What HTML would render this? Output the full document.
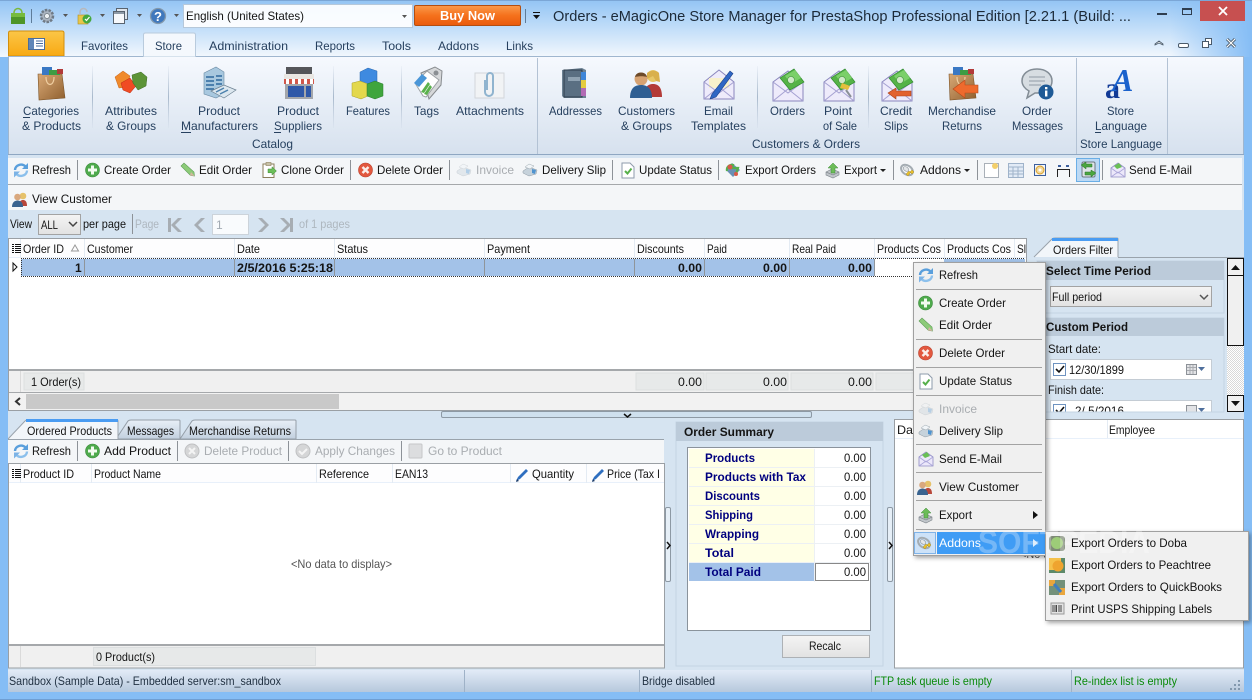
<!DOCTYPE html>
<html lang="en"><head><meta charset="utf-8"><title>Orders - eMagicOne Store Manager</title>
<style>
html,body{margin:0;padding:0;width:1252px;height:700px;overflow:hidden;background:#85bdf5}
svg{display:block}
text{font-family:"Liberation Sans",Arial,sans-serif;font-size:12px;fill:#141414;white-space:pre}
.r text{fill:#26405f}
.g text{fill:#a9adb1}
.b{font-weight:bold}
.n{font-weight:bold;fill:#00007f}
</style></head><body>
<svg xmlns="http://www.w3.org/2000/svg" width="1252" height="700" viewBox="0 0 1252 700">
<defs>
<linearGradient id="win" x1="0" y1="0" x2="0" y2="1"><stop offset="0" stop-color="#93c4f4"/><stop offset=".5" stop-color="#c2def9"/><stop offset="1" stop-color="#f2f7fd"/></linearGradient>
<linearGradient id="edge" x1="0" y1="0" x2="1" y2="0"><stop offset="0" stop-color="#85bdf5" stop-opacity="0"/><stop offset="1" stop-color="#85bdf5"/></linearGradient>
<linearGradient id="rib" x1="0" y1="0" x2="0" y2="1"><stop offset="0" stop-color="#f6f9fe"/><stop offset="1" stop-color="#d6e1ee"/></linearGradient>
<linearGradient id="gold" x1="0" y1="0" x2="0" y2="1"><stop offset="0" stop-color="#fbc647"/><stop offset="1" stop-color="#f8a913"/></linearGradient>
<linearGradient id="buy" x1="0" y1="0" x2="0" y2="1"><stop offset="0" stop-color="#fb9a4c"/><stop offset=".5" stop-color="#f5711c"/><stop offset="1" stop-color="#ea5a0c"/></linearGradient>
<linearGradient id="stat" x1="0" y1="0" x2="0" y2="1"><stop offset="0" stop-color="#e2ebf7"/><stop offset="1" stop-color="#b6c8dc"/></linearGradient>
<linearGradient id="btn" x1="0" y1="0" x2="0" y2="1"><stop offset="0" stop-color="#f4f4f4"/><stop offset="1" stop-color="#e2e2e2"/></linearGradient>
<linearGradient id="tabo" x1="0" y1="0" x2="0" y2="1"><stop offset="0" stop-color="#e8eff7"/><stop offset="1" stop-color="#c2d0df"/></linearGradient>
<linearGradient id="sep" x1="0" y1="0" x2="0" y2="1"><stop offset="0" stop-color="#b3c2d4" stop-opacity=".1"/><stop offset=".5" stop-color="#a9b9cc"/><stop offset="1" stop-color="#b3c2d4" stop-opacity=".1"/></linearGradient>
<linearGradient id="kraft" x1="0" y1="0" x2="1" y2="1"><stop offset="0" stop-color="#d9a976"/><stop offset="1" stop-color="#8f5f2e"/></linearGradient>
<filter id="sh" x="-5%" y="-5%" width="112%" height="112%"><feDropShadow dx="2" dy="2" stdDeviation="2" flood-color="#000" flood-opacity=".35"/></filter>
<pattern id="hatch" width="2" height="2" patternUnits="userSpaceOnUse"><rect width="2" height="2" fill="#fff"/><rect width="1" height="1" fill="#d8d8d8"/><rect x="1" y="1" width="1" height="1" fill="#d8d8d8"/></pattern>

<g id="i-refresh"><path d="M2 8A6 5.500 0 0 1 12.500 4.500" fill="none" stroke="#5a9fdc" stroke-width="2.400"/><path d="M15 1v6h-6z" fill="#5a9fdc"/><path d="M14 8.500A6 5.500 0 0 1 3.500 12" fill="none" stroke="#8cc0ec" stroke-width="2.400"/><path d="M1 15.500v-6h6z" fill="#7cb3e6"/></g>
<g id="i-plus"><circle cx="7.500" cy="8" r="7" fill="#4eaa4c" stroke="#3d8a3d" stroke-width=".6"/><path d="M6 3.500h3v3h3v3H9v3H6v-3H3v-3h3z" fill="#f2fbef"/></g>
<g id="i-edit"><path d="M1 4l3-3 10 9 .5 4-4-.5z" fill="#8ccb78" stroke="#5f9d58" stroke-width=".6"/><path d="M11 10l3.500 4-4.500-.5z" fill="#d4b5a0"/></g>
<g id="i-del"><circle cx="7.500" cy="8" r="7" fill="#e2583f" stroke="#b9422e" stroke-width=".6"/><path d="M4.500 5l6 6M10.500 5l-6 6" stroke="#fbeeea" stroke-width="2.400"/></g>
<g id="i-clone"><rect x="1" y="2" width="11" height="13.500" fill="#fff" stroke="#8a7d5a"/><rect x="4" y="0.500" width="5" height="3" fill="#c8c2a8" stroke="#8a7d5a" stroke-width=".6"/><path d="M6 7h4V4.800L14.500 9 10 13v-2.200H6z" fill="#6cbf59" stroke="#3f8a38" stroke-width=".5"/></g>
<g id="i-print"><path d="M1 9l6-4 8 3-1 4-7 2-6-3z" fill="#c6d2db" stroke="#8c98a2" stroke-width=".5"/><path d="M3 5l4-3 5 2-4 3z" fill="#f1f5f8" stroke="#9ba6ae" stroke-width=".5"/><path d="M10 7l4 1-1 4-3-1z" fill="#4f93cf"/></g>
<g id="i-update"><path d="M1 1h8l4 4v11H1z" fill="#fff" stroke="#8e9bab"/><path d="M4 9l2.500 2.500L10.500 6.500" fill="none" stroke="#56b04a" stroke-width="2"/></g>
<g id="i-exo"><path d="M1 8l6-7 8 7-7 7z" fill="#6a8fb4"/><path d="M2 9a5 5 0 0 1 6-6l-1 3h6l-2 6" fill="none" stroke="#55b04e" stroke-width="2.200"/><circle cx="5" cy="5" r="2.500" fill="#d85a48"/><circle cx="11" cy="12" r="2" fill="#d85a48"/></g>
<g id="i-exp"><path d="M1 10l6-3 7 3v3l-6 3-7-3z" fill="#c1c6cb" stroke="#7d848a" stroke-width=".6"/><path d="M1 10l7 3 6-3" fill="none" stroke="#858b90" stroke-width=".7"/><path d="M8 1l5 5h-3v5H6V6H3z" fill="#6cbc58" stroke="#3e8a38" stroke-width=".5"/></g>
<g id="i-add"><ellipse cx="7" cy="8" rx="6.500" ry="4.500" transform="rotate(35 7 8)" fill="none" stroke="#a4acb2" stroke-width="2"/><ellipse cx="6" cy="7" rx="3" ry="2" transform="rotate(35 6 7)" fill="#e3e6e8" stroke="#8b949b" stroke-width=".6"/><path d="M6 12l3-3 1.500 1.500L8 14zM10 10l2-2 2 2-2 2z" fill="#e8bf2b" stroke="#a0821b" stroke-width=".4"/></g>
<g id="i-mail"><path d="M1 6l7-5 7 5v9H1z" fill="#ece8fa" stroke="#8f8bc4" stroke-width=".8"/><path d="M1 15l7-5 7 5M1 6l7 5 7-5" fill="none" stroke="#a9a5d8" stroke-width=".8"/><path d="M4 4l5-3 3 4-5 2z" fill="#69bf55"/></g>
<g id="i-users"><circle cx="11" cy="5" r="3.300" fill="#e6c26a"/><path d="M7 15c0-5 2-6 4-6s4 1 4 6z" fill="#b8473a"/><circle cx="5.500" cy="6" r="3.300" fill="#d9a87e"/><path d="M0 16c0-5 3-6.500 5.500-6.500S11 11 11 16z" fill="#39638f"/></g>
<g id="i-pen"><path d="M1 14l2-4L11 2l2 2-8 8z" fill="#2f6fc0"/><path d="M1 15l1-3 2 2z" fill="#1c3b66"/></g>
<g id="dd"><path d="M0 0h5l-2.500 3z" fill="#555"/></g>
<g id="dd2"><path d="M0 0h6l-3 3z" fill="#222"/></g>
<g id="grid-i"><path d="M0 0h2v1H0zM3 0h6v1H3zM0 2h2v1H0zM3 2h6v1H3zM0 4h2v1H0zM3 4h6v1H3zM0 6h2v1H0zM3 6h6v1H3zM0 8h2v1H0zM3 8h6v1H3z" fill="#111"/></g>
<g id="env"><path d="M1 14l15-11 15 11v19H1z" fill="#eeebfb" stroke="#8a86bd"/><path d="M1 33l15-12 15 12M1 14l15 11 15-11" fill="none" stroke="#a5a1d2"/><path d="M8 10l14-9 10 13-14 8z" fill="#55b347" stroke="#2f8a2e" stroke-width=".7"/><path d="M13 8l10-6 6 8-10 6z" fill="#7bd069"/><circle cx="19" cy="12" r="3.500" fill="#cfe9c7" stroke="#3f8d3a" stroke-width=".6"/></g>
<g id="bag"><path d="M2 7h24l3 24-26 2z" fill="url(#kraft)" stroke="#7c5428" stroke-width=".6"/><path d="M6 0h10v8H6z" fill="#3a78c4"/><path d="M13 3h11v5H13z" fill="#3d9c43"/><path d="M21 2h6v5h-6z" fill="#b23a3a"/><path d="M10 10c0 10 8 10 8 0" fill="none" stroke="#f0cfa2" stroke-width="1.200"/></g>
</defs>

<!-- window frame -->
<rect width="1252" height="700" fill="#85bdf5"/>
<rect width="1252" height="57" fill="url(#win)"/>
<rect x="1170" width="82" height="57" fill="url(#edge)"/>
<rect width="1252" height="1" fill="#7ba6d6"/>
<rect x="0" y="699" width="1252" height="1" fill="#6f9ed2"/>

<!-- close buttons -->
<rect x="1200" y="1" width="45" height="20" fill="#c75050"/>
<path d="M1219 7l8 8M1227 7l-8 8" stroke="#fff" stroke-width="1.800"/>
<rect x="1157" y="13" width="10" height="2" fill="#2f3e4f"/>
<rect x="1182.500" y="8.500" width="9" height="6" fill="none" stroke="#2f3e4f"/><rect x="1182" y="8" width="10" height="2" fill="#2f3e4f"/>

<!-- QAT -->
<path d="M11 13h14v11H11z" fill="#4f9526"/><path d="M14 13c0-6 8-6 8 0" fill="none" stroke="#7ab83c" stroke-width="1.500"/><path d="M11 13h14v4H11z" fill="#77bb3c"/>
<rect x="31" y="9" width="1" height="14" fill="#5e7c99"/>
<circle cx="47" cy="16" r="6" fill="#aab4c0" stroke="#6f7a86" stroke-width="2.500" stroke-dasharray="2.500 1.200"/><circle cx="47" cy="16" r="2.500" fill="#eef1f4" stroke="#70797f" stroke-width=".7"/>
<use href="#dd" x="63" y="14"/>
<rect x="78" y="15" width="10" height="9" fill="#e8c64a" stroke="#b08f22" stroke-width=".6"/><path d="M80 15v-3a3.500 3.500 0 0 1 7 0" fill="none" stroke="#b7b9bd" stroke-width="1.500"/><circle cx="87" cy="19" r="4.500" fill="#45a83f"/><path d="M85 19l1.500 1.500L89.500 17" fill="none" stroke="#fff" stroke-width="1.200"/>
<use href="#dd" x="100" y="14"/>
<rect x="116.500" y="8.500" width="11" height="11" fill="#dfe5ec" stroke="#58636f"/><rect x="113.500" y="11.500" width="11" height="12" fill="#f6f8fb" stroke="#58636f"/><rect x="114" y="12" width="10" height="2" fill="#8d99a6"/>
<use href="#dd" x="137" y="14"/>
<circle cx="158" cy="16" r="7.500" fill="#3f78bd" stroke="#8499ac" stroke-width="1.300"/><text x="154" y="21" style="font-weight:bold;fill:#fff;font-size:13px">?</text>
<use href="#dd" x="174" y="14"/>
<rect x="183.500" y="4.500" width="229" height="23" fill="#fff" fill-opacity=".92" stroke="#b6c8da"/>
<text x="186" y="20" textLength="118" lengthAdjust="spacingAndGlyphs">English (United States)</text>
<use href="#dd" x="402" y="15"/>
<rect x="414.500" y="5.500" width="106" height="20" rx="1.500" fill="url(#buy)" stroke="#b34e10"/>
<text x="440" y="20" textLength="55" lengthAdjust="spacingAndGlyphs" style="fill:#fff;font-weight:bold;font-size:13px">Buy Now</text>
<rect x="525" y="9" width="1" height="14" fill="#5e7c99"/>
<rect x="533" y="12" width="7" height="1" fill="#111"/><path d="M533 15h7l-3.500 4z" fill="#111"/>
<text x="553" y="21" textLength="578" lengthAdjust="spacingAndGlyphs" style="font-size:15px;fill:#1c2a38">Orders - eMagicOne Store Manager for PrestaShop Professional Edition [2.21.1 (Build: ...</text>

<!-- ribbon tabs -->
<path d="M8.500 56V33q0-2 2-2h51.500q2 0 2 2v23z" fill="url(#gold)" stroke="#d38f0c"/>
<rect x="28.500" y="38.500" width="16" height="11" fill="#fff" stroke="#4a6d9c"/><rect x="29" y="39" width="5" height="10" fill="#5f86b8"/><path d="M36 41h7M36 43.500h7M36 46h7" stroke="#4a6d9c"/>
<path d="M143.500 57V35q0-2 2-2h48q2 0 2 2v22z" fill="#f4f8fd" stroke="#b9cbdd"/>
<g class="r">
<text x="81" y="50" textLength="47" lengthAdjust="spacingAndGlyphs">Favorites</text>
<text x="155" y="50" textLength="27" lengthAdjust="spacingAndGlyphs">Store</text>
<text x="209" y="50" textLength="79" lengthAdjust="spacingAndGlyphs">Administration</text>
<text x="315" y="50" textLength="40" lengthAdjust="spacingAndGlyphs">Reports</text>
<text x="382" y="50" textLength="29" lengthAdjust="spacingAndGlyphs">Tools</text>
<text x="438" y="50" textLength="41" lengthAdjust="spacingAndGlyphs">Addons</text>
<text x="506" y="50" textLength="27" lengthAdjust="spacingAndGlyphs">Links</text>
</g>
<path d="M1155 44l4-3 4 3v1l-4-2-4 2z" fill="#fff" stroke="#4a5a6a" stroke-width=".8"/>
<rect x="1178.500" y="43.500" width="10" height="4" rx="1.500" fill="#fff" stroke="#4a5a6a"/>
<rect x="1205.500" y="38.500" width="6" height="6" fill="#fff" stroke="#4a5a6a"/><rect x="1202.500" y="41.500" width="6" height="6" fill="#fff" stroke="#4a5a6a"/>
<path d="M1227 39l8 8M1235 39l-8 8" stroke="#4a5a6a" stroke-width="3"/><path d="M1227 39l8 8M1235 39l-8 8" stroke="#fff" stroke-width="1.200"/>

<!-- ribbon -->
<rect x="8" y="57" width="1236" height="98" fill="url(#rib)"/>
<path d="M143 56.500H8.500V155M196 56.500H1243.500V155" fill="none" stroke="#9fb6cf"/>
<rect x="8" y="154" width="1236" height="1" fill="#8fa7c2"/>
<g fill="url(#sep)">
<rect x="92" y="66" width="1" height="62"/><rect x="168" y="66" width="1" height="62"/><rect x="333" y="66" width="1" height="62"/><rect x="401" y="66" width="1" height="62"/><rect x="757" y="66" width="1" height="62"/><rect x="868" y="66" width="1" height="62"/>
</g>
<rect x="537" y="58" width="1" height="96" fill="#b3c2d4"/><rect x="1076" y="58" width="1" height="96" fill="#b3c2d4"/><rect x="1167" y="58" width="1" height="96" fill="#b3c2d4"/>

<!-- ribbon icons -->
<use href="#bag" x="36" y="67"/>
<g transform="translate(115,71)"><path d="M0 6l8-6 7 5-4 11-7 1z" fill="#f08a2c" stroke="#c5611a" stroke-width=".5"/><path d="M6 12l9-5 6 8-6 7-7-3z" fill="#f04b24" stroke="#b92f14" stroke-width=".5"/><path d="M17 4l9-3 6 5-1 9-8 4-5-7z" fill="#5c9438" stroke="#3d6c24" stroke-width=".5"/></g>
<g transform="translate(204,67)"><path d="M0 6l12-6 8 5v22l-8 4-12-4z" fill="#a8c8df" stroke="#6a8aa3" stroke-width=".6"/><path d="M2 10h8M2 14h8M2 18h8M2 22h8M12 9h6M12 13h6M12 17h6" stroke="#3f76a8" stroke-width="1.800"/><path d="M7 24l13-6 12 5-12 8z" fill="#dce7ef" stroke="#6a7f90" stroke-width=".7"/><path d="M12 25l8-4M16 27l8-4" stroke="#4d82ad" stroke-width="1.500"/></g>
<g transform="translate(284,67)"><rect x="2" y="0" width="26" height="7" fill="#55565a"/><rect x="0" y="7" width="30" height="5" fill="#e9e7e3"/><path d="M0 12h30v5H0z" fill="#d0574a"/><path d="M2 12h3v5H2zM8 12h3v5H8zM14 12h3v5h-3zM20 12h3v5h-3zM26 12h3v5h-3z" fill="#fff"/><rect x="1" y="17" width="28" height="15" fill="#a3a6ab"/><rect x="4" y="19" width="16" height="11" fill="#2f58a8"/><rect x="22" y="19" width="5" height="11" fill="#2f58a8"/></g>
<g transform="translate(352,68)"><path d="M8 4l8-4 9 3v11l-9 3-8-3z" fill="#3e8ae0" stroke="#2766ad" stroke-width=".5"/><path d="M0 15l8-2 8 3v12l-7 3-9-3z" fill="#e3d84d" stroke="#a79f2a" stroke-width=".5"/><path d="M15 16l8-3 8 3v12l-8 3-8-3z" fill="#3fa53d" stroke="#2a7a2c" stroke-width=".5"/></g>
<g transform="translate(413,67)"><path d="M8 6l14-6 7 4-1 14-12 14z" fill="#d6d8da" stroke="#868a8e"/><path d="M2 16L14 4l12 9-13 17-3-1z" fill="#fff" stroke="#9da1a5"/><path d="M1 16l8-9 5 4-8 9z" fill="#4a96d8"/><path d="M8 25l7-10 2 2-6 9zM11 27l6-9 2 2-5 8z" fill="#5ab14c"/><circle cx="23" cy="6" r="2.500" fill="#8b8f93"/></g>
<g transform="translate(475,70)"><rect x="0" y="3" width="29" height="25" fill="#f1f3f5" stroke="#d2d6da"/><path d="M10 10v12a4 4 0 0 0 8 0V6a3 3 0 0 0-6 0v14" fill="none" stroke="#90b4cf" stroke-width="2"/></g>
<g transform="translate(561,67)"><path d="M1 3l20-2 4 2v28H3l-2-2z" fill="#6d8294"/><path d="M3 3h18v27H3z" fill="#5a6f82" stroke="#2e3e4d"/><rect x="7" y="10" width="12" height="4" fill="#8fa2b2"/><rect x="20" y="5" width="5" height="8" fill="#3f86d8"/><rect x="20" y="13" width="5" height="8" fill="#e4cc3f"/><rect x="20" y="21" width="5" height="8" fill="#b26bb5"/></g>
<g transform="translate(630,69)"><circle cx="23" cy="7" r="6" fill="#e7c767"/><path d="M14 28c0-10 4-13 9-13s9 3 9 13z" fill="#b33b38"/><path d="M17 4c3-3 10-3 12 0l1 9-4-1-3-5-6 3z" fill="#d9b04b"/><circle cx="11" cy="10" r="6.500" fill="#d6a272"/><path d="M5 8c1-6 11-6 12 0-3-1-8-1-12 0z" fill="#6d4a2a"/><path d="M0 29c0-10 5-13 11-13s11 3 11 13z" fill="#2f5f93"/></g>
<g transform="translate(703,68)"><path d="M1 14l15-12 15 12v17H1z" fill="#eeebfb" stroke="#8a86bd"/><path d="M6 10h20v10H6z" fill="#f8f1cc"/><path d="M1 31l15-12 15 12M1 14l15 11 15-11" fill="none" stroke="#a5a1d2"/><path d="M9 26L27 3l3 2.500L13 29l-6 2z" fill="#2f66c4" stroke="#1b3f86" stroke-width=".6"/></g>
<use href="#env" x="772" y="68"/>
<use href="#env" x="823" y="68"/><path d="M842 83l8 3-2 4-8-2z" fill="#e4bf3d"/><path d="M846 90l5 7" stroke="#8b9197" stroke-width="2"/>
<use href="#env" x="881" y="68"/><path d="M888 93l8-5v3h15v5h-15v3z" fill="#e2622e" stroke="#a8401a" stroke-width=".6"/>
<use href="#bag" x="947" y="67"/><path d="M953 89l12-9v5h13v8h-13v5z" fill="#ee6a2d" stroke="#b64a1b" stroke-width=".6"/>
<g transform="translate(1022,69)"><path d="M15 0c9 0 15 5 15 12s-6 12-15 12l-2 0-8 5 2-7C3 20 0 16 0 12 0 5 6 0 15 0z" fill="#d7dde2" stroke="#838d96" stroke-width="1.500"/><path d="M7 8h16M7 12h16M7 16h12" stroke="#929ca5"/><circle cx="24" cy="23" r="7.500" fill="#1e5a96"/><rect x="23" y="21.500" width="2.400" height="6" fill="#fff"/><rect x="23" y="18" width="2.400" height="2.300" fill="#fff"/></g>
<text x="1105" y="98" style="font-family:'Liberation Serif',serif;font-weight:bold;font-size:30px;fill:#123a96">a</text>
<text x="1112" y="91" style="font-family:'Liberation Serif',serif;font-weight:bold;font-style:italic;font-size:32px;fill:#1b62cc">A</text>

<!-- ribbon labels -->
<g class="r">
<text x="23" y="115" textLength="56" lengthAdjust="spacingAndGlyphs">Categories</text><rect x="23" y="117" width="7" height="1" fill="#26405f"/>
<text x="22" y="130" textLength="59" lengthAdjust="spacingAndGlyphs">&amp; Products</text>
<text x="105" y="115" textLength="52" lengthAdjust="spacingAndGlyphs">Attributes</text>
<text x="106" y="130" textLength="50" lengthAdjust="spacingAndGlyphs">&amp; Groups</text>
<text x="198" y="115" textLength="42" lengthAdjust="spacingAndGlyphs">Product</text>
<text x="181" y="130" textLength="77" lengthAdjust="spacingAndGlyphs">Manufacturers</text><rect x="181" y="132" width="10" height="1" fill="#26405f"/>
<text x="277" y="115" textLength="42" lengthAdjust="spacingAndGlyphs">Product</text>
<text x="274" y="130" textLength="48" lengthAdjust="spacingAndGlyphs">Suppliers</text><rect x="274" y="132" width="7" height="1" fill="#26405f"/>
<text x="346" y="115" textLength="44" lengthAdjust="spacingAndGlyphs">Features</text>
<text x="414" y="115" textLength="25" lengthAdjust="spacingAndGlyphs">Tags</text>
<text x="456" y="115" textLength="68" lengthAdjust="spacingAndGlyphs">Attachments</text>
<text x="549" y="115" textLength="53" lengthAdjust="spacingAndGlyphs">Addresses</text>
<text x="618" y="115" textLength="57" lengthAdjust="spacingAndGlyphs">Customers</text>
<text x="621" y="130" textLength="51" lengthAdjust="spacingAndGlyphs">&amp; Groups</text>
<text x="704" y="115" textLength="29" lengthAdjust="spacingAndGlyphs">Email</text>
<text x="691" y="130" textLength="55" lengthAdjust="spacingAndGlyphs">Templates</text>
<text x="770" y="115" textLength="35" lengthAdjust="spacingAndGlyphs">Orders</text>
<text x="824" y="115" textLength="28" lengthAdjust="spacingAndGlyphs">Point</text>
<text x="823" y="130" textLength="34" lengthAdjust="spacingAndGlyphs">of Sale</text>
<text x="880" y="115" textLength="32" lengthAdjust="spacingAndGlyphs">Credit</text>
<text x="884" y="130" textLength="24" lengthAdjust="spacingAndGlyphs">Slips</text>
<text x="928" y="115" textLength="68" lengthAdjust="spacingAndGlyphs">Merchandise</text>
<text x="942" y="130" textLength="40" lengthAdjust="spacingAndGlyphs">Returns</text>
<text x="1022" y="115" textLength="30" lengthAdjust="spacingAndGlyphs">Order</text>
<text x="1012" y="130" textLength="51" lengthAdjust="spacingAndGlyphs">Messages</text>
<text x="1107" y="115" textLength="27" lengthAdjust="spacingAndGlyphs">Store</text>
<text x="1095" y="130" textLength="52" lengthAdjust="spacingAndGlyphs">Language</text><rect x="1095" y="132" width="6" height="1" fill="#26405f"/>
<text x="252" y="148" textLength="41" lengthAdjust="spacingAndGlyphs">Catalog</text>
<text x="752" y="148" textLength="108" lengthAdjust="spacingAndGlyphs">Customers &amp; Orders</text>
<text x="1080" y="148" textLength="82" lengthAdjust="spacingAndGlyphs">Store Language</text>
</g>

<!-- main area backgrounds -->
<rect x="8" y="155" width="1236" height="515" fill="#d6e4f1"/>
<rect x="8" y="158" width="1234" height="52" fill="#f4f6f8"/>
<rect x="8" y="184" width="1234" height="1" fill="#a5a8ab"/>

<!-- toolbar 1 -->
<use href="#i-refresh" x="13" y="162"/><text x="32" y="174" textLength="39" lengthAdjust="spacingAndGlyphs">Refresh</text>
<g fill="#8d9298"><rect x="77" y="160" width="1" height="20"/><rect x="350" y="160" width="1" height="20"/><rect x="449" y="160" width="1" height="20"/><rect x="612" y="160" width="1" height="20"/><rect x="718" y="160" width="1" height="20"/><rect x="893" y="160" width="1" height="20"/><rect x="977" y="160" width="1" height="20"/><rect x="1102" y="160" width="1" height="20"/></g>
<use href="#i-plus" x="85" y="162"/><text x="104" y="174" textLength="67" lengthAdjust="spacingAndGlyphs">Create Order</text>
<use href="#i-edit" x="180" y="162"/><text x="199" y="174" textLength="53" lengthAdjust="spacingAndGlyphs">Edit Order</text>
<use href="#i-clone" x="262" y="162"/><text x="281" y="174" textLength="63" lengthAdjust="spacingAndGlyphs">Clone Order</text>
<use href="#i-del" x="358" y="162"/><text x="377" y="174" textLength="66" lengthAdjust="spacingAndGlyphs">Delete Order</text>
<use href="#i-print" x="456" y="162" opacity=".4"/><text x="476" y="174" textLength="38" lengthAdjust="spacingAndGlyphs" style="fill:#a9adb1">Invoice</text>
<use href="#i-print" x="522" y="162"/><text x="542" y="174" textLength="64" lengthAdjust="spacingAndGlyphs">Delivery Slip</text>
<use href="#i-update" x="621" y="162"/><text x="639" y="174" textLength="73" lengthAdjust="spacingAndGlyphs">Update Status</text>
<use href="#i-exo" x="725" y="162"/><text x="745" y="174" textLength="71" lengthAdjust="spacingAndGlyphs">Export Orders</text>
<use href="#i-exp" x="825" y="162"/><text x="844" y="174" textLength="33" lengthAdjust="spacingAndGlyphs">Export</text><use href="#dd2" x="880" y="169"/>
<use href="#i-add" x="900" y="162"/><text x="920" y="174" textLength="41" lengthAdjust="spacingAndGlyphs">Addons</text><use href="#dd2" x="964" y="169"/>
<rect x="984.500" y="163.500" width="14" height="14" fill="#fff" stroke="#a9b0b8"/><circle cx="995" cy="166" r="3" fill="#f3cf6a"/>
<rect x="1008.500" y="163.500" width="15" height="14" fill="#e2ebf6" stroke="#9fb3ca"/><path d="M1009 167h14M1009 171h14M1009 174h14M1013 167v10M1018 167v10" stroke="#9fb3ca"/>
<rect x="1034.500" y="164.500" width="11" height="11" fill="none" stroke="#3c5f9d"/><circle cx="1040" cy="170" r="4" fill="#f3d89a" stroke="#d9a02a"/><circle cx="1040" cy="170" r="1.500" fill="#fff"/>
<path d="M1058 166h3M1066 166h3" stroke="#3c5f9d" stroke-width="2"/><path d="M1057.500 177v-7.500h12V177" fill="none" stroke="#222"/>
<rect x="1076.500" y="158.500" width="23" height="23" fill="#bcd9f4" stroke="#6aaee6"/>
<rect x="1082" y="162" width="13" height="15" rx="1.500" fill="#dfe4e8" stroke="#6e7880"/><path d="M1081 165l5-3v2h6v3h-6v2z" fill="#4ba53f" stroke="#27752a" stroke-width=".5"/><path d="M1096 173l-5-3v2h-6v3h6v2z" fill="#4ba53f" stroke="#27752a" stroke-width=".5"/>
<use href="#i-mail" x="1110" y="162"/><text x="1129" y="174" textLength="63" lengthAdjust="spacingAndGlyphs">Send E-Mail</text>
<use href="#i-users" x="12" y="191"/><text x="32" y="203" textLength="80" lengthAdjust="spacingAndGlyphs">View Customer</text>

<!-- pager -->
<text x="10" y="228" textLength="22" lengthAdjust="spacingAndGlyphs">View</text>
<rect x="38.500" y="214.500" width="42" height="20" fill="url(#btn)" stroke="#a3a3a3"/>
<text x="41" y="229" textLength="17" lengthAdjust="spacingAndGlyphs">ALL</text>
<path d="M69 222l4 4 4-4" fill="none" stroke="#444" stroke-width="1.500"/>
<text x="83" y="228" textLength="43" lengthAdjust="spacingAndGlyphs">per page</text>
<rect x="132" y="214" width="1" height="20" fill="#8d9298"/>
<rect x="212.500" y="214.500" width="36" height="20" fill="#fff" stroke="#ccd3da" fill-opacity=".85"/>
<text x="135" y="228" textLength="24" lengthAdjust="spacingAndGlyphs" style="fill:#aeb7bf">Page</text><text x="299" y="228" textLength="51" lengthAdjust="spacingAndGlyphs" style="fill:#aeb7bf">of 1 pages</text><text x="216" y="229" style="fill:#a3acb4">1</text>
<g fill="#a7adb3"><rect x="168" y="218" width="3" height="14"/><path d="M182 218l-7 7 7 7h-4l-7-7 7-7z"/><path d="M205 218l-7 7 7 7h-4l-7-7 7-7z"/><path d="M258 218l7 7-7 7h4l7-7-7-7z"/><path d="M280 218l7 7-7 7h4l7-7-7-7z"/><rect x="290" y="218" width="3" height="14"/></g>

<!-- orders grid -->
<rect x="8.500" y="238.500" width="1018" height="172" fill="#fff" stroke="#9a9fa4"/>
<rect x="9" y="239" width="1017" height="19" fill="#fdfdfe"/>
<rect x="9" y="257" width="1017" height="1" fill="#e8f0fa"/>
<g fill="#e4ebf3"><rect x="20" y="239" width="1" height="19"/><rect x="84" y="239" width="1" height="19"/><rect x="234" y="239" width="1" height="19"/><rect x="334" y="239" width="1" height="19"/><rect x="484" y="239" width="1" height="19"/><rect x="634" y="239" width="1" height="19"/><rect x="704" y="239" width="1" height="19"/><rect x="789" y="239" width="1" height="19"/><rect x="874" y="239" width="1" height="19"/><rect x="944" y="239" width="1" height="19"/><rect x="1014" y="239" width="1" height="19"/></g>
<use href="#grid-i" x="12" y="244"/>
<text x="23" y="253" textLength="41" lengthAdjust="spacingAndGlyphs">Order ID</text>
<path d="M71.500 251l3.500-6 3.500 6z" fill="none" stroke="#999"/>
<text x="87" y="253" textLength="46" lengthAdjust="spacingAndGlyphs">Customer</text>
<text x="237" y="253" textLength="23" lengthAdjust="spacingAndGlyphs">Date</text>
<text x="337" y="253" textLength="31" lengthAdjust="spacingAndGlyphs">Status</text>
<text x="487" y="253" textLength="43" lengthAdjust="spacingAndGlyphs">Payment</text>
<text x="637" y="253" textLength="47" lengthAdjust="spacingAndGlyphs">Discounts</text>
<text x="707" y="253" textLength="20" lengthAdjust="spacingAndGlyphs">Paid</text>
<text x="792" y="253" textLength="44" lengthAdjust="spacingAndGlyphs">Real Paid</text>
<text x="877" y="253" textLength="64" lengthAdjust="spacingAndGlyphs">Products Cos</text>
<text x="947" y="253" textLength="64" lengthAdjust="spacingAndGlyphs">Products Cos</text>
<text x="1017" y="253" textLength="9" lengthAdjust="spacingAndGlyphs">Sl</text>
<rect x="21" y="259" width="854" height="17" fill="#a3c2e8"/>
<rect x="944" y="259" width="81" height="17" fill="#a3c2e8"/>
<g shape-rendering="crispEdges"><path d="M21 258.500H1025M21 276.500H1025M21.500 258v19" stroke="#333" stroke-dasharray="1 1" fill="none"/></g>
<g fill="#8f959b"><rect x="84" y="259" width="1" height="17"/><rect x="234" y="259" width="1" height="17"/><rect x="334" y="259" width="1" height="17"/><rect x="484" y="259" width="1" height="17"/><rect x="634" y="259" width="1" height="17"/><rect x="704" y="259" width="1" height="17"/><rect x="789" y="259" width="1" height="17"/><rect x="874" y="259" width="1" height="17"/></g>
<path d="M13 263l4 4-4 4z" fill="#fff" stroke="#111"/>
<text x="75" y="272" class="b">1</text>
<text x="237" y="272" class="b" textLength="96" lengthAdjust="spacingAndGlyphs">2/5/2016 5:25:18</text>
<text x="678" y="272" class="b" textLength="24" lengthAdjust="spacingAndGlyphs">0.00</text>
<text x="763" y="272" class="b" textLength="24" lengthAdjust="spacingAndGlyphs">0.00</text>
<text x="848" y="272" class="b" textLength="24" lengthAdjust="spacingAndGlyphs">0.00</text>
<!-- grid footer -->
<rect x="9" y="369" width="1017" height="2" fill="#a5a8ab"/>
<rect x="9" y="371" width="1017" height="22" fill="#f0f0f0"/>
<rect x="20" y="371" width="1" height="22" fill="#dadada"/>
<rect x="24" y="373" width="60" height="17" fill="#e7e9e9" stroke="#dcdfe0"/>
<text x="31" y="386" textLength="50" lengthAdjust="spacingAndGlyphs">1 Order(s)</text>
<g fill="#e7e9e9" stroke="#dcdfe0"><rect x="636" y="373" width="68" height="17"/><rect x="706" y="373" width="82" height="17"/><rect x="791" y="373" width="82" height="17"/><rect x="876" y="373" width="40" height="17"/></g>
<text x="678" y="386" textLength="24" lengthAdjust="spacingAndGlyphs">0.00</text>
<text x="763" y="386" textLength="24" lengthAdjust="spacingAndGlyphs">0.00</text>
<text x="848" y="386" textLength="24" lengthAdjust="spacingAndGlyphs">0.00</text>
<rect x="9" y="392" width="1017" height="1" fill="#a5a8ab"/>
<rect x="9" y="393" width="1017" height="17" fill="#f2f2f2"/>
<path d="M20 398l-4 3.500 4 3.500" fill="none" stroke="#333" stroke-width="2"/>
<rect x="26" y="394" width="313" height="15" fill="#c9c9c9"/>
<rect x="8" y="410" width="1020" height="1" fill="#9a9fa4"/>

<!-- orders filter -->
<path d="M1034 257l18-18q1-1 3-1h62q1 0 1 1v18" fill="#f2f6fa" stroke="#9aa3ac"/>
<rect x="1052" y="238" width="66" height="3" fill="#4a9cf2"/>
<text x="1053" y="254" textLength="60" lengthAdjust="spacingAndGlyphs">Orders Filter</text>
<path d="M1118 257.500H1244" stroke="#9aa3ac"/>
<rect x="1037" y="261" width="187" height="52" fill="#d6e4f1" stroke="#c4d4e3"/>
<rect x="1037" y="261" width="187" height="19" fill="#bccbda"/>
<text x="1046" y="275" class="b" textLength="105" lengthAdjust="spacingAndGlyphs">Select Time Period</text>
<rect x="1050.500" y="286.500" width="161" height="20" fill="url(#btn)" stroke="#a3a3a3"/>
<text x="1052" y="301" textLength="50" lengthAdjust="spacingAndGlyphs">Full period</text>
<path d="M1200 295l4 4 4-4" fill="none" stroke="#555" stroke-width="1.500"/>
<rect x="1037" y="318" width="187" height="94" fill="#d6e4f1" stroke="#c4d4e3"/>
<rect x="1037" y="318" width="187" height="18" fill="#bccbda"/>
<text x="1046" y="331" class="b" textLength="82" lengthAdjust="spacingAndGlyphs">Custom Period</text>
<text x="1048" y="353" textLength="53" lengthAdjust="spacingAndGlyphs">Start date:</text>
<rect x="1050.500" y="359.500" width="161" height="20" fill="#fff" stroke="#c4ccd4"/>
<rect x="1053.500" y="363.500" width="12" height="12" fill="#fff" stroke="#6f93c0"/><path d="M1056 369l3 3 5-6" fill="none" stroke="#111" stroke-width="1.600"/>
<text x="1069" y="374" textLength="55" lengthAdjust="spacingAndGlyphs">12/30/1899</text>
<rect x="1186.500" y="364.500" width="10" height="10" fill="#e2e3e6" stroke="#8d9298"/><path d="M1187 367.500h9M1187 370.500h9M1190 365v9M1193 365v9" stroke="#a8abb0"/><path d="M1198 367h7l-3.500 4z" fill="#4f6f9c"/>
<text x="1048" y="394" textLength="56" lengthAdjust="spacingAndGlyphs">Finish date:</text>
<svg x="1050" y="400" width="162" height="11.500" viewBox="1050 400 162 11.500">
<rect x="1050.500" y="400.500" width="161" height="20" fill="#fff" stroke="#c4ccd4"/>
<rect x="1053.500" y="404.500" width="12" height="12" fill="#fff" stroke="#6f93c0"/><path d="M1056 410l3 3 5-6" fill="none" stroke="#111" stroke-width="1.600"/>
<text x="1075" y="415" textLength="49" lengthAdjust="spacingAndGlyphs">2/ 5/2016</text>
<rect x="1186.500" y="405.500" width="10" height="10" fill="#e2e3e6" stroke="#8d9298"/><path d="M1198 408h7l-3.500 4z" fill="#4f6f9c"/>
</svg>
<rect x="1227" y="258" width="17" height="154" fill="url(#hatch)"/>
<rect x="1227.500" y="258.500" width="16" height="17" fill="#f0f0f0" stroke="#111"/><path d="M1231 270l4.500-5 4.500 5z" fill="#111"/>
<rect x="1227.500" y="275.500" width="16" height="70" fill="#f0f0f0" stroke="#111"/>
<rect x="1227.500" y="395.500" width="16" height="16" fill="#f0f0f0" stroke="#111"/><path d="M1231 401l4.500 5 4.500-5z" fill="#111"/>

<!-- splitter -->
<rect x="441.500" y="411.500" width="370" height="6" rx="1.500" fill="#cfe0ee" stroke="#8d99a4"/>
<path d="M624 414l3.500 3 3.500-3" fill="none" stroke="#111" stroke-width="1.500"/>

<!-- bottom tabs -->
<path d="M296 439v-18q0-1-1-1h-100q-2 0-3 1l-12 18z" fill="url(#tabo)" stroke="#959ea8"/>
<path d="M180 439v-18q0-1-1-1h-48q-2 0-3 1l-12 18z" fill="url(#tabo)" stroke="#959ea8"/>
<path d="M8 439l17-18q1-1 3-1h89q1 0 1 1v18" fill="#f2f6fa" stroke="#9aa3ac"/>
<rect x="26" y="419" width="92" height="3" fill="#4a9cf2"/>
<text x="27" y="435" textLength="85" lengthAdjust="spacingAndGlyphs">Ordered Products</text>
<text x="127" y="435" textLength="47" lengthAdjust="spacingAndGlyphs">Messages</text>
<text x="189" y="435" textLength="102" lengthAdjust="spacingAndGlyphs">Merchandise Returns</text>

<!-- bottom toolbar -->
<rect x="8" y="439" width="656" height="24" fill="#f4f6f8"/>
<rect x="8" y="439" width="656" height="1" fill="#9aa3ac"/>
<use href="#i-refresh" x="13" y="443"/><text x="32" y="455" textLength="39" lengthAdjust="spacingAndGlyphs">Refresh</text>
<use href="#i-plus" x="85" y="443"/><text x="104" y="455" textLength="67" lengthAdjust="spacingAndGlyphs">Add Product</text>
<rect x="77" y="441" width="1" height="20" fill="#8d9298"/><rect x="177" y="441" width="1" height="20" fill="#8d9298"/><rect x="288" y="441" width="1" height="20" fill="#8d9298"/><rect x="401" y="441" width="1" height="20" fill="#8d9298"/>
<circle cx="192" cy="451" r="7" fill="#d5d6d7" stroke="#bfc0c2"/><path d="M189 448l6 6M195 448l-6 6" stroke="#f4f4f4" stroke-width="2"/>
<text x="204" y="455" textLength="78" lengthAdjust="spacingAndGlyphs" style="fill:#a9adb1">Delete Product</text>
<circle cx="303" cy="451" r="7" fill="#d5d6d7" stroke="#bfc0c2"/><path d="M299 451l3 3 5-5" fill="none" stroke="#f4f4f4" stroke-width="2"/>
<text x="315" y="455" textLength="80" lengthAdjust="spacingAndGlyphs" style="fill:#a9adb1">Apply Changes</text>
<rect x="409" y="444" width="13" height="14" rx="1" fill="#dcdddf" stroke="#c6c7c9"/>
<text x="428" y="455" textLength="74" lengthAdjust="spacingAndGlyphs" style="fill:#a9adb1">Go to Product</text>

<!-- products grid -->
<rect x="8.500" y="463.500" width="656" height="204.500" fill="#fff" stroke="#9a9fa4"/>
<rect x="9" y="464" width="655" height="19" fill="#fdfdfe"/>
<rect x="9" y="482" width="655" height="1" fill="#e8f0fa"/>
<g fill="#e4ebf3"><rect x="20" y="464" width="1" height="19"/><rect x="91" y="464" width="1" height="19"/><rect x="316" y="464" width="1" height="19"/><rect x="392" y="464" width="1" height="19"/><rect x="510" y="464" width="1" height="19"/><rect x="586" y="464" width="1" height="19"/></g>
<use href="#grid-i" x="12" y="469"/>
<text x="23" y="478" textLength="51" lengthAdjust="spacingAndGlyphs">Product ID</text>
<text x="94" y="478" textLength="67" lengthAdjust="spacingAndGlyphs">Product Name</text>
<text x="319" y="478" textLength="50" lengthAdjust="spacingAndGlyphs">Reference</text>
<text x="395" y="478" textLength="33" lengthAdjust="spacingAndGlyphs">EAN13</text>
<use href="#i-pen" x="515" y="467"/><text x="532" y="478" textLength="42" lengthAdjust="spacingAndGlyphs">Quantity</text>
<use href="#i-pen" x="591" y="467"/><text x="607" y="478" textLength="53" lengthAdjust="spacingAndGlyphs">Price (Tax I</text>
<text x="291" y="568" textLength="101" lengthAdjust="spacingAndGlyphs" style="fill:#555">&lt;No data to display&gt;</text>
<rect x="9" y="644" width="655" height="2" fill="#a5a8ab"/>
<rect x="9" y="646" width="655" height="21.500" fill="#f0f0f0"/>
<rect x="20" y="646" width="1" height="21" fill="#dadada"/>
<rect x="93.500" y="647.500" width="222" height="18" fill="#e7e9e9" stroke="#dcdfe0"/>
<text x="96" y="661" textLength="59" lengthAdjust="spacingAndGlyphs">0 Product(s)</text>

<!-- collapse handles -->
<rect x="665.500" y="507.500" width="5" height="74" rx="1.500" fill="#e6eff7" stroke="#8d99a4"/>
<path d="M667 542l3 3.500-3 3.500" fill="none" stroke="#111" stroke-width="1.500"/>
<rect x="887.500" y="507.500" width="5" height="74" rx="1.500" fill="#e6eff7" stroke="#8d99a4"/>
<path d="M889 542l3 3.500-3 3.500" fill="none" stroke="#111" stroke-width="1.500"/>

<!-- order summary -->
<rect x="676" y="422" width="207" height="244" fill="#d6e4f1" stroke="#c4d4e3"/>
<rect x="676" y="422" width="207" height="19" fill="#bccbda"/>
<text x="684" y="436" class="b" textLength="90" lengthAdjust="spacingAndGlyphs">Order Summary</text>
<rect x="687.500" y="447.500" width="183" height="183" fill="#fff" stroke="#8a939c"/>
<rect x="689" y="449" width="125" height="114" fill="#ffffe6"/>
<g fill="#ecf0f4"><rect x="689" y="467" width="181" height="1"/><rect x="689" y="486" width="181" height="1"/><rect x="689" y="505" width="181" height="1"/><rect x="689" y="524" width="181" height="1"/><rect x="689" y="543" width="181" height="1"/><rect x="689" y="562" width="181" height="1"/><rect x="814" y="449" width="1" height="133"/></g>
<rect x="689" y="563" width="125" height="18" fill="#a3c2e8"/>
<text x="705" y="462" class="n" textLength="50" lengthAdjust="spacingAndGlyphs">Products</text>
<text x="705" y="481" class="n" textLength="101" lengthAdjust="spacingAndGlyphs">Products with Tax</text>
<text x="705" y="500" class="n" textLength="55" lengthAdjust="spacingAndGlyphs">Discounts</text>
<text x="705" y="519" class="n" textLength="48" lengthAdjust="spacingAndGlyphs">Shipping</text>
<text x="705" y="538" class="n" textLength="54" lengthAdjust="spacingAndGlyphs">Wrapping</text>
<text x="705" y="557" class="n" textLength="29" lengthAdjust="spacingAndGlyphs">Total</text>
<text x="705" y="576" class="n" textLength="56" lengthAdjust="spacingAndGlyphs">Total Paid</text>
<g><text x="844" y="462" textLength="22" lengthAdjust="spacingAndGlyphs">0.00</text><text x="844" y="481" textLength="22" lengthAdjust="spacingAndGlyphs">0.00</text><text x="844" y="500" textLength="22" lengthAdjust="spacingAndGlyphs">0.00</text><text x="844" y="519" textLength="22" lengthAdjust="spacingAndGlyphs">0.00</text><text x="844" y="538" textLength="22" lengthAdjust="spacingAndGlyphs">0.00</text><text x="844" y="557" textLength="22" lengthAdjust="spacingAndGlyphs">0.00</text><text x="844" y="576" textLength="22" lengthAdjust="spacingAndGlyphs">0.00</text></g>
<rect x="815.500" y="563.500" width="53" height="17" fill="none" stroke="#111" stroke-dasharray="1 1" shape-rendering="crispEdges"/>
<rect x="782.500" y="635.500" width="87" height="22" fill="url(#btn)" stroke="#adb1b5"/>
<text x="809" y="650" textLength="32" lengthAdjust="spacingAndGlyphs">Recalc</text>

<!-- right grid -->
<rect x="894.500" y="419.500" width="349" height="248.500" fill="#fff" stroke="#9a9fa4"/>
<rect x="895" y="438" width="348" height="1" fill="#e8f0fa"/>
<rect x="1107" y="420" width="1" height="18" fill="#e4ebf3"/>
<text x="897" y="434" textLength="16" lengthAdjust="spacingAndGlyphs">Da</text>
<text x="1109" y="434" textLength="46" lengthAdjust="spacingAndGlyphs">Employee</text>
<text x="1020" y="558" textLength="100" lengthAdjust="spacingAndGlyphs" style="fill:#555">&lt;No data to display&gt;</text>

<!-- status bar -->
<rect x="8" y="670" width="1236" height="22" fill="url(#stat)"/>
<g fill="#9fb2c7"><rect x="464" y="670" width="1" height="22"/><rect x="639" y="670" width="1" height="22"/><rect x="871" y="670" width="1" height="22"/><rect x="1071" y="670" width="1" height="22"/></g>
<text x="9" y="685" textLength="272" lengthAdjust="spacingAndGlyphs" style="fill:#1f2f40">Sandbox (Sample Data) - Embedded server:sm_sandbox</text>
<text x="642" y="685" textLength="73" lengthAdjust="spacingAndGlyphs" style="fill:#1f2f40">Bridge disabled</text>
<text x="874" y="685" textLength="118" lengthAdjust="spacingAndGlyphs" style="fill:#0a8a0a">FTP task queue is empty</text>
<text x="1074" y="685" textLength="103" lengthAdjust="spacingAndGlyphs" style="fill:#0a8a0a">Re-index list is empty</text>
<g fill="#8298ae"><rect x="1238" y="680" width="2" height="2"/><rect x="1234" y="684" width="2" height="2"/><rect x="1238" y="684" width="2" height="2"/><rect x="1230" y="688" width="2" height="2"/><rect x="1234" y="688" width="2" height="2"/><rect x="1238" y="688" width="2" height="2"/></g>

<!-- context menu -->
<rect x="913.500" y="262.500" width="132" height="293" fill="#f0f0f0" stroke="#a0a0a0" filter="url(#sh)"/>
<g fill="#a3a3a3"><rect x="916" y="289" width="126" height="1"/><rect x="916" y="339" width="126" height="1"/><rect x="916" y="367" width="126" height="1"/><rect x="916" y="395" width="126" height="1"/><rect x="916" y="444" width="126" height="1"/><rect x="916" y="472" width="126" height="1"/><rect x="916" y="500" width="126" height="1"/><rect x="916" y="529" width="126" height="1"/></g>
<use href="#i-refresh" x="918" y="267"/><text x="939" y="279" textLength="39" lengthAdjust="spacingAndGlyphs">Refresh</text>
<use href="#i-plus" x="918" y="295"/><text x="939" y="307" textLength="67" lengthAdjust="spacingAndGlyphs">Create Order</text>
<use href="#i-edit" x="918" y="317"/><text x="939" y="329" textLength="53" lengthAdjust="spacingAndGlyphs">Edit Order</text>
<use href="#i-del" x="918" y="345"/><text x="939" y="357" textLength="66" lengthAdjust="spacingAndGlyphs">Delete Order</text>
<use href="#i-update" x="919" y="373"/><text x="939" y="385" textLength="73" lengthAdjust="spacingAndGlyphs">Update Status</text>
<use href="#i-print" x="918" y="401" opacity=".35"/><text x="939" y="413" textLength="38" lengthAdjust="spacingAndGlyphs" style="fill:#a9adb1">Invoice</text>
<use href="#i-print" x="918" y="423"/><text x="939" y="435" textLength="64" lengthAdjust="spacingAndGlyphs">Delivery Slip</text>
<use href="#i-mail" x="918" y="451"/><text x="939" y="463" textLength="63" lengthAdjust="spacingAndGlyphs">Send E-Mail</text>
<use href="#i-users" x="917" y="479"/><text x="939" y="491" textLength="80" lengthAdjust="spacingAndGlyphs">View Customer</text>
<use href="#i-exp" x="918" y="507"/><text x="939" y="519" textLength="33" lengthAdjust="spacingAndGlyphs">Export</text>
<path d="M1033 511l5 4-5 4z" fill="#111"/>
<rect x="937" y="532" width="108" height="22" fill="#3f9cf5"/>
<rect x="914.500" y="532.500" width="21" height="21" fill="#cde2f8" stroke="#7fb3e8"/>
<use href="#i-add" x="917" y="535"/>

<!-- submenu -->
<rect x="1045.500" y="531.500" width="203" height="89" fill="#f0f0f0" stroke="#a0a0a0" filter="url(#sh)"/>
<rect x="1049" y="536" width="16" height="15" rx="3" fill="#7e8a76"/><circle cx="1057" cy="543" r="6" fill="#9dcc78"/>
<rect x="1049" y="558" width="16" height="15" fill="#5d8a6a"/><rect x="1049" y="558" width="12" height="12" fill="#f5c14b"/><circle cx="1058" cy="566" r="5.500" fill="#efa42f"/>
<rect x="1049" y="580" width="16" height="15" fill="#73917a"/><path d="M1049 580h6v6h-6zM1059 588h6v7h-6z" fill="#e9a63d"/><path d="M1054 584l7 8" stroke="#3f7ec0" stroke-width="3"/>
<rect x="1051" y="603" width="13" height="11" fill="#e2e2e2" stroke="#9a9a9a"/><path d="M1053 605v7M1055 605v7M1056.500 605v7M1059 605v7M1061 605v7" stroke="#444"/>

<!-- watermark below text -->
<text x="978" y="553" textLength="172" lengthAdjust="spacingAndGlyphs" style="font-weight:bold;font-size:32px;fill:#fff;opacity:.28">SOFTPEDIA</text>

<text x="939" y="547" textLength="42" lengthAdjust="spacingAndGlyphs" style="fill:#fff">Addons</text>
<path d="M1033 539l5 4-5 4z" fill="#dfeefc"/>
<text x="1071" y="547" textLength="116" lengthAdjust="spacingAndGlyphs">Export Orders to Doba</text>
<text x="1071" y="569" textLength="140" lengthAdjust="spacingAndGlyphs">Export Orders to Peachtree</text>
<text x="1071" y="591" textLength="151" lengthAdjust="spacingAndGlyphs">Export Orders to QuickBooks</text>
<text x="1071" y="613" textLength="141" lengthAdjust="spacingAndGlyphs">Print USPS Shipping Labels</text>
</svg>
</body></html>
